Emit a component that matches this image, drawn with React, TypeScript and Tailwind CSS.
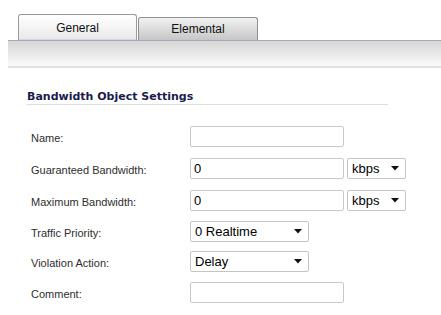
import React from "react";

const Arrow = () => (
  <svg width="8" height="5" viewBox="0 0 8 5" className="shrink-0">
    <path d="M0 0H8L4 4.5Z" fill="#111" />
  </svg>
);

const TextBox = ({ value = "" }: { value?: string }) => (
  <div className="w-[154px] h-[21px] border border-[#c9c9c9] rounded-[2px] bg-white flex items-center pl-[3px] text-[13px] text-black leading-none">
    {value}
  </div>
);

const SelectBox = ({ value, w }: { value: string; w: string }) => (
  <div
    className={`${w} h-[21px] border border-[#c4c4c4] rounded-[2px] bg-white flex items-center justify-between pl-[4px] pr-[6px] text-[13px] text-black leading-none`}
  >
    <span>{value}</span>
    <Arrow />
  </div>
);

const Row = ({ label, mt, children }: { label: string; mt: string; children: React.ReactNode }) => (
  <div className={`flex items-center ${mt}`}>
    <div className="w-[159px] pl-[31px] pt-[3px] box-content text-[11px] text-[#2e2e2e]">{label}</div>
    <div className="flex items-center gap-[3px]">{children}</div>
  </div>
);

export default function App() {
  return (
    <div className="w-[441px] h-[315px] bg-white overflow-hidden" style={{ fontFamily: '"Liberation Sans", Arial, sans-serif' }}>
      <div className="flex items-end pl-[18px] pt-[14px] relative z-10">
        <div className="w-[119px] h-[26px] border border-b-0 border-[#9a9a9a] rounded-t-[3px] bg-gradient-to-b from-white to-[#e9e9e9] flex items-center justify-center text-[12px] text-[#111] shadow-[inset_0_-1px_0_#d6d6ea]">
          General
        </div>
        <div className="ml-px w-[120px] h-[23px] border border-b-0 border-[#8e8e8e] rounded-t-[3px] bg-gradient-to-b from-[#f2f2f2] to-[#c6c6c6] flex items-center justify-center text-[12px] text-[#111]">
          Elemental
        </div>
      </div>
      <div className="ml-[8px] h-[28px] border-t border-[#a9a9bb] border-b-2 border-b-[#e2e2e2] bg-gradient-to-b from-[#d6d6d6] to-[#fbfbfb]" />
      <div className="ml-[27px] mr-[53px] mt-[22px] h-[15px] border-b border-[#dcdcdc] text-[11px] font-bold text-[#1b1b4d] leading-[14px]" style={{ fontFamily: '"DejaVu Sans", Verdana, sans-serif' }}>
        Bandwidth Object Settings
      </div>
      <Row label="Name:" mt="mt-[21px]">
        <TextBox />
      </Row>
      <Row label="Guaranteed Bandwidth:" mt="mt-[11px]">
        <TextBox value="0" />
        <SelectBox value="kbps" w="w-[59px]" />
      </Row>
      <Row label="Maximum Bandwidth:" mt="mt-[11px]">
        <TextBox value="0" />
        <SelectBox value="kbps" w="w-[59px]" />
      </Row>
      <Row label="Traffic Priority:" mt="mt-[10px]">
        <SelectBox value="0 Realtime" w="w-[119px]" />
      </Row>
      <Row label="Violation Action:" mt="mt-[9px]">
        <SelectBox value="Delay" w="w-[119px]" />
      </Row>
      <Row label="Comment:" mt="mt-[10px]">
        <TextBox />
      </Row>
    </div>
  );
}
